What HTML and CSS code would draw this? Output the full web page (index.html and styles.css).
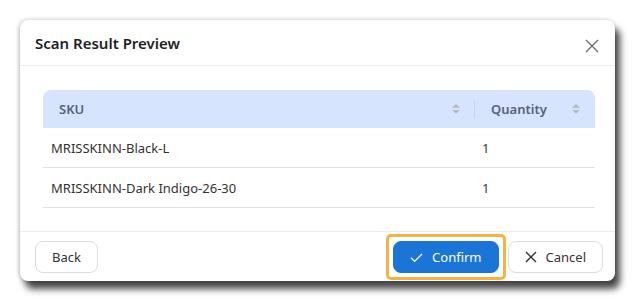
FILE: index.html
```html
<!DOCTYPE html>
<html lang="en">
<head>
  <meta charset="UTF-8" />
  <meta name="viewport" content="width=device-width,initial-scale=1" />
  <title>Scan Result Preview</title>
  <link rel="stylesheet" href="styles.css">
</head>
<body>
  <div class="dialog">
    <div class="dialog-head">
      <h2>Scan Result Preview</h2>
      <button class="close-btn" aria-label="Close">
        <svg width="14" height="14" viewBox="0 0 14 14"><path d="M1 1L13 13M13 1L1 13" stroke="#6b6b6b" stroke-width="1.3" fill="none"/></svg>
      </button>
    </div>

    <div class="dialog-body">
      <table class="result-table">
        <thead>
          <tr>
            <th class="col-sku">
              <div class="th-inner">
                <span>SKU</span>
                <span class="sorter"><i class="up"></i><i class="down"></i></span>
              </div>
            </th>
            <th class="col-qty">
              <div class="th-inner">
                <span>Quantity</span>
                <span class="sorter"><i class="up"></i><i class="down"></i></span>
              </div>
            </th>
          </tr>
        </thead>
        <tbody>
          <tr><td>MRISSKINN-Black-L</td><td class="qty">1</td></tr>
          <tr><td>MRISSKINN-Dark Indigo-26-30</td><td class="qty">1</td></tr>
        </tbody>
      </table>
    </div>

    <div class="dialog-foot">
      <button class="btn">Back</button>
      <div class="foot-right">
        <span class="focus-ring">
          <button class="btn btn-primary">
            <svg width="13" height="13" viewBox="0 0 13 13"><path d="M1 6.8L4.6 10.4L12 3" stroke="#fff" stroke-width="1.3" fill="none"/></svg>
            Confirm
          </button>
        </span>
        <button class="btn">
          <svg width="12" height="12" viewBox="0 0 12 12"><path d="M1 1L11 11M11 1L1 11" stroke="#333" stroke-width="1.4" fill="none"/></svg>
          Cancel
        </button>
      </div>
    </div>
  </div>
</body>
</html>
```

FILE: styles.css
```css
body {
  margin: 0;
  padding: 20px;
  background: #fff;
  font-family: "Noto Sans", "Open Sans", sans-serif;
  color: #333;
}
.dialog {
  width: 595px;
  box-sizing: border-box;
  background: #fff;
  border-radius: 8px;
  box-shadow: 5px 8px 7px rgba(0, 0, 0, 0.72), -1px 0 4px rgba(0, 0, 0, 0.25);
}
.dialog-head {
  display: flex;
  align-items: center;
  justify-content: space-between;
  height: 45px;
  padding: 0 16px 0 15px;
  border-bottom: 1px solid #ebebeb;
}
.dialog-head h2 {
  margin: 0;
  font-size: 15px;
  font-weight: 600;
  color: #1f1f1f;
}
.close-btn {
  border: none;
  background: none;
  padding: 0;
  display: flex;
  margin-top: 6px;
}
.dialog-body {
  padding: 24px 20px 23px 23px;
}
.result-table {
  width: 100%;
  border-collapse: collapse;
  font-size: 13px;
}
.result-table th {
  background: #d6e4fd;
  color: #566176;
  font-weight: 600;
  text-align: left;
  height: 38px;
  padding: 0;
}
.col-sku {
  border-top-left-radius: 8px;
}
.col-qty {
  width: 121px;
  border-top-right-radius: 8px;
}
.th-inner {
  display: flex;
  align-items: center;
  justify-content: space-between;
  padding: 0 15px 0 16px;
}
.col-sku .th-inner {
  padding-right: 14px;
}
.col-qty .th-inner {
  border-left: 1px solid #c6d3ea;
  padding-left: 16px;
}
.sorter {
  display: flex;
  flex-direction: column;
  gap: 2px;
}
.sorter i {
  width: 0;
  height: 0;
  border-left: 4px solid transparent;
  border-right: 4px solid transparent;
}
.sorter .up {
  border-bottom: 4px solid #b8bcc4;
}
.sorter .down {
  border-top: 4px solid #b8bcc4;
}
.result-table td {
  height: 39px;
  padding: 0 8px;
  border-bottom: 1px solid #e0e0e0;
  color: #333;
}
.result-table td.qty {
  color: #3a3a3a;
}
.dialog-foot {
  display: flex;
  justify-content: space-between;
  align-items: center;
  padding: 9px 12px 8px 15px;
  border-top: 1px solid #ebebeb;
}
.foot-right {
  display: flex;
  align-items: center;
  gap: 2px;
}
.focus-ring {
  display: flex;
  margin: -7px 0;
  padding: 4px;
  border: 3px solid #f6b345;
  border-radius: 5px;
}
.btn {
  display: flex;
  align-items: center;
  gap: 9px;
  height: 32px;
  padding: 0 16px;
  border: 1px solid #dcdcdc;
  border-radius: 8px;
  background: #fff;
  font-family: inherit;
  font-size: 13px;
  color: #333;
  cursor: pointer;
}
.btn-primary {
  background: #1b75d6;
  border-color: #1b75d6;
  color: #fff;
}
```
